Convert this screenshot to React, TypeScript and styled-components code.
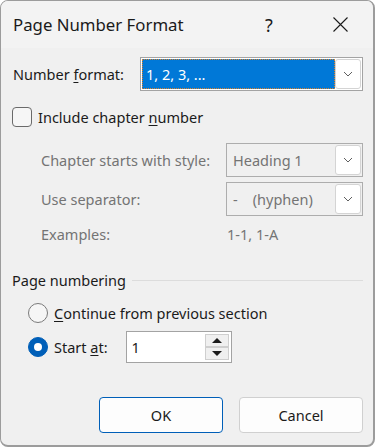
import React from "react";
import styled, { createGlobalStyle } from "styled-components";

const GlobalStyle = createGlobalStyle`
  html, body {
    margin: 0;
    padding: 0;
    background: #ffffff;
  }
  body {
    font-family: "Segoe UI", "Noto Sans", "Open Sans", sans-serif;
    color: #1b1b1b;
  }
`;

const Window = styled.div`
  box-sizing: border-box;
  width: 375px;
  height: 447px;
  background: #f0f0f0;
  border: 1px solid #9c9c9c;
  border-right-width: 2px;
  border-bottom-width: 2px;
  border-radius: 8px;
  overflow: hidden;
  display: flex;
  flex-direction: column;
  font-size: 14.5px;
`;

const TitleBar = styled.div`
  height: 47px;
  display: flex;
  align-items: center;
  padding-left: 12px;
  background: #f3f3f3;
`;

const Title = styled.div`
  font-size: 16.8px;
  color: #1a1a1a;
  flex: 1;
`;

const TitleButton = styled.div`
  width: 46px;
  height: 40px;
  display: flex;
  align-items: center;
  justify-content: center;
  font-size: 18px;
  color: #1a1a1a;
`;

const Body = styled.div`
  display: flex;
  flex-direction: column;
  padding: 0 10px 0 11px;
`;

const Row = styled.div<{ $top: number; $indent?: number }>`
  display: flex;
  align-items: center;
  margin-top: ${(p) => p.$top}px;
  padding-left: ${(p) => p.$indent ?? 0}px;
`;

const Label = styled.span<{ $width?: number; $disabled?: boolean }>`
  width: ${(p) => (p.$width ? `${p.$width}px` : "auto")};
  flex-shrink: 0;
  color: ${(p) => (p.$disabled ? "#747474" : "#1b1b1b")};
  white-space: nowrap;
`;

const Key = styled.span`
  text-decoration: underline;
  text-underline-offset: 2px;
`;

const Select = styled.div<{ $disabled?: boolean }>`
  box-sizing: border-box;
  flex: 1;
  height: 34px;
  display: flex;
  align-items: stretch;
  padding: 1px;
  border: 1px solid ${(p) => (p.$disabled ? "#adadad" : "#a3a3a3")};
  background: ${(p) => (p.$disabled ? "#f0f0f0" : "#ffffff")};
  color: ${(p) => (p.$disabled ? "#747474" : "#1b1b1b")};
`;

const SelectValue = styled.div<{ $selected?: boolean }>`
  flex: 1;
  display: flex;
  align-items: center;
  padding-left: ${(p) => (p.$selected ? 3 : 4)}px;
  background: ${(p) => (p.$selected ? "#0078d7" : "transparent")};
  color: ${(p) => (p.$selected ? "#ffffff" : "inherit")};
  border: 1px dotted ${(p) => (p.$selected ? "#d9822b" : "transparent")};
  white-space: pre;
`;

const DropButton = styled.div`
  box-sizing: border-box;
  width: 26px;
  background: #ffffff;
  border: 1px solid #d4d4d4;
  border-radius: 3px;
  display: flex;
  align-items: center;
  justify-content: center;
`;

const Checkbox = styled.div`
  box-sizing: border-box;
  width: 20px;
  height: 20px;
  border: 1px solid #6a6a6a;
  border-radius: 4px;
  background: #f6f6f6;
  margin-right: 6px;
`;

const Radio = styled.div<{ $checked?: boolean }>`
  box-sizing: border-box;
  width: 20px;
  height: 20px;
  border-radius: 50%;
  margin-right: 6px;
  background: ${(p) => (p.$checked ? "#005fb8" : "#f6f6f6")};
  border: 1px solid ${(p) => (p.$checked ? "#005fb8" : "#7a7a7a")};
  display: flex;
  align-items: center;
  justify-content: center;
  &::after {
    content: "";
    display: ${(p) => (p.$checked ? "block" : "none")};
    width: 8px;
    height: 8px;
    border-radius: 50%;
    background: #ffffff;
  }
`;

const GroupHeader = styled.div`
  display: flex;
  align-items: center;
  gap: 6px;
  margin-top: 26px;
  height: 20px;
`;

const Rule = styled.div`
  flex: 1;
  height: 1px;
  background: #dcdcdc;
  margin-top: 1px;
`;

const SpinBox = styled.div`
  box-sizing: border-box;
  width: 106px;
  height: 32px;
  border: 1px solid #a3a3a3;
  background: #ffffff;
  display: flex;
  align-items: center;
  padding: 2px 2px 2px 5px;
  margin-left: 18px;
`;

const SpinValue = styled.div`
  flex: 1;
`;

const SpinButtons = styled.div`
  width: 24px;
  height: 26px;
  display: flex;
  flex-direction: column;
`;

const SpinButton = styled.div`
  flex: 1;
  box-sizing: border-box;
  border: 1px solid #cfcfcf;
  background: #f0f0f0;
  display: flex;
  align-items: center;
  justify-content: center;
`;

const ButtonBar = styled.div`
  display: flex;
  justify-content: flex-end;
  gap: 16px;
  margin-top: 34px;
`;

const Button = styled.div<{ $primary?: boolean }>`
  box-sizing: border-box;
  width: 124px;
  height: 36px;
  border-radius: 4px;
  background: #fdfdfd;
  border: 1px solid ${(p) => (p.$primary ? "#005fb8" : "#d0d0d0")};
  display: flex;
  align-items: center;
  justify-content: center;
  color: #1b1b1b;
`;

const Chevron = () => (
  <svg width="10" height="6" viewBox="0 0 10 6">
    <path d="M1 1 L5 5 L9 1" fill="none" stroke="#606060" strokeWidth="1" />
  </svg>
);

const Triangle = ({ up }: { up?: boolean }) => (
  <svg width="10" height="5" viewBox="0 0 10 5">
    <path d={up ? "M0 5 L5 0 L10 5 Z" : "M0 0 L5 5 L10 0 Z"} fill="#1b1b1b" />
  </svg>
);

const CloseIcon = () => (
  <svg width="15" height="15" viewBox="0 0 15 15">
    <path d="M0.5 0.5 L14.5 14.5 M14.5 0.5 L0.5 14.5" stroke="#1a1a1a" strokeWidth="1.1" />
  </svg>
);

export default function App() {
  return (
    <>
      <GlobalStyle />
      <Window>
        <TitleBar>
          <Title>Page Number Format</Title>
          <TitleButton>?</TitleButton>
          <TitleButton style={{ marginLeft: 25, marginRight: 10 }}>
            <CloseIcon />
          </TitleButton>
        </TitleBar>
        <Body>
          <Row $top={9} $indent={1}>
            <Label $width={127}>
              Number <Key>f</Key>ormat:
            </Label>
            <Select>
              <SelectValue $selected>1, 2, 3, ...</SelectValue>
              <DropButton>
                <Chevron />
              </DropButton>
            </Select>
          </Row>

          <Row $top={16}>
            <Checkbox />
            <Label>
              Include chapter <Key>n</Key>umber
            </Label>
          </Row>

          <Row $top={16} $indent={29}>
            <Label $width={185} $disabled>
              Chapter starts with style:
            </Label>
            <Select $disabled>
              <SelectValue>Heading 1</SelectValue>
              <DropButton>
                <Chevron />
              </DropButton>
            </Select>
          </Row>
          <Row $top={5} $indent={29}>
            <Label $width={185} $disabled>
              Use separator:
            </Label>
            <Select $disabled>
              <SelectValue>{"-    (hyphen)"}</SelectValue>
              <DropButton>
                <Chevron />
              </DropButton>
            </Select>
          </Row>
          <Row $top={8} $indent={29} style={{ height: 20 }}>
            <Label $width={186} $disabled>
              Examples:
            </Label>
            <Label $disabled>1-1, 1-A</Label>
          </Row>

          <GroupHeader>
            <Label>Page numbering</Label>
            <Rule />
          </GroupHeader>

          <Row $top={12} $indent={16} style={{ height: 22 }}>
            <Radio />
            <Label>
              <Key>C</Key>ontinue from previous section
            </Label>
          </Row>
          <Row $top={7} $indent={16}>
            <Radio $checked />
            <Label>
              Start <Key>a</Key>t:
            </Label>
            <SpinBox>
              <SpinValue>1</SpinValue>
              <SpinButtons>
                <SpinButton>
                  <Triangle up />
                </SpinButton>
                <SpinButton>
                  <Triangle />
                </SpinButton>
              </SpinButtons>
            </SpinBox>
          </Row>

          <ButtonBar>
            <Button $primary>OK</Button>
            <Button>Cancel</Button>
          </ButtonBar>
        </Body>
      </Window>
    </>
  );
}
